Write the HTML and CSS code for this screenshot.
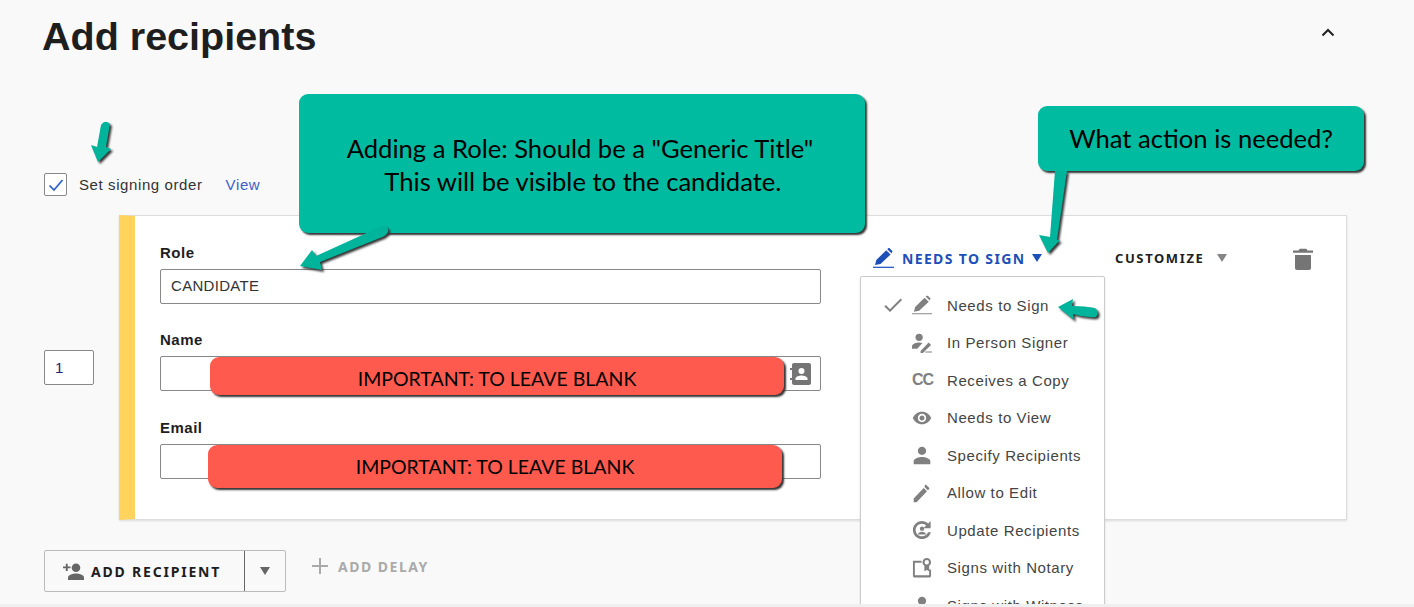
FILE: index.html
```html
<!DOCTYPE html>
<html lang="en">
<head>
  <meta charset="UTF-8">
  <meta name="viewport" content="width=device-width, initial-scale=1.0">
  <title>Add recipients</title>
  <link rel="stylesheet" href="styles.css">
</head>
<body>
  <svg class="defs" width="0" height="0">
    <symbol id="pen-line" viewBox="0 0 21 20">
      <path d="M2 17l1.300-5L13.200 2.300 17.600 6.500 7.500 16zM14.300 1.200 15.200.3c.4-.4 1-.4 1.400 0l2.500 2.400c.4.4.4 1 0 1.400l-.5 1.300z"/>
      <rect x="0" y="18.700" width="21" height="1.200"/>
    </symbol>
    <symbol id="person" viewBox="0 0 24 24">
      <path d="M12 12c2.800 0 5-2.200 5-5s-2.200-5-5-5-5 2.200-5 5 2.200 5 5 5zm0 2.500c-3.300 0-10 1.700-10 5V23h20v-3.500c0-3.300-6.700-5-10-5z"/>
    </symbol>
  </svg>

  <div class="page">
    <header class="head">
      <h1>Add recipients</h1>
      <svg class="chevron" viewBox="0 0 14 9" width="14" height="9"><path d="M1.500 7.500 7 2l5.500 5.500" fill="none" stroke="#222" stroke-width="2"/></svg>
    </header>

    <div class="order-row">
      <span class="checkbox">
        <svg viewBox="0 0 16 14" width="16" height="14"><path d="M1.500 7.500 6 12 14.500 2" fill="none" stroke="#2b5fd0" stroke-width="1.700"/></svg>
      </span>
      <span class="order-label">Set signing order</span>
      <a class="view" href="#">View</a>
    </div>

    <div class="recipient">
      <div class="order-box">1</div>
      <section class="card">
        <div class="fields">
          <div class="field">
            <label>Role</label>
            <div class="input">CANDIDATE</div>
          </div>
          <div class="field">
            <label>Name</label>
            <div class="input">
              <svg class="contact" viewBox="0 0 22 24" width="22" height="24">
                <path d="M4 1h15c1.100 0 2 .9 2 2v18c0 1.100-.9 2-2 2H4c-1.100 0-2-.9-2-2v-3H0v-2h2V8H0V6h2V3c0-1.100.9-2 2-2z" fill="#757575"/>
                <circle cx="11.500" cy="9" r="3" fill="#fff"/>
                <path d="M5.500 18v-1.500c0-2 4-3 6-3s6 1 6 3V18z" fill="#fff"/>
              </svg>
            </div>
          </div>
          <div class="field">
            <label>Email</label>
            <div class="input"></div>
          </div>
        </div>

        <div class="actions">
          <div class="action-col">
            <button class="action action-sign">
              <svg class="action-icon" width="21" height="20"><use href="#pen-line"/></svg>
              NEEDS TO SIGN
              <i class="caret"></i>
            </button>
            <ul class="menu">
              <li>
                <svg class="tick" viewBox="0 0 24 24" width="24" height="24"><path d="M9 16.200 4.800 12l-1.400 1.400L9 19 21 7l-1.400-1.400z"/></svg>
                <svg class="menu-icon" viewBox="0 0 21 20"><use href="#pen-line"/></svg>
                Needs to Sign
              </li>
              <li>
                <svg class="menu-icon" viewBox="0 0 21 20">
                  <circle cx="7.500" cy="4" r="3.800"/>
                  <path d="M0 16v-2.500c0-2.500 4.500-4 7.500-4 1.200 0 2.400.2 3.500.6L5.500 16zM9 18.500l8.500-9 2.500 2.500-8.500 8.500H9zM14 18.800h7V20h-7z"/>
                </svg>
                In Person Signer
              </li>
              <li>
                <span class="menu-icon cc">CC</span>
                Receives a Copy
              </li>
              <li>
                <svg class="menu-icon" viewBox="0 0 24 24"><path d="M12 4.500C7 4.500 2.700 7.600 1 12c1.700 4.400 6 7.500 11 7.500s9.300-3.100 11-7.500c-1.700-4.400-6-7.500-11-7.500zM12 17c-2.800 0-5-2.200-5-5s2.200-5 5-5 5 2.200 5 5-2.200 5-5 5zm0-8c-1.700 0-3 1.300-3 3s1.300 3 3 3 3-1.300 3-3-1.300-3-3-3z"/></svg>
                Needs to View
              </li>
              <li>
                <svg class="menu-icon" viewBox="0 0 24 24"><use href="#person"/></svg>
                Specify Recipients
              </li>
              <li>
                <svg class="menu-icon" viewBox="0 0 24 24"><path d="M2 18.500V23h3.500L18 10l-4-4zM20.500 7.500c.5-.5.5-1.200 0-1.700l-3.300-3.300c-.5-.5-1.200-.5-1.700 0L15 4.800l4 4z"/></svg>
                Allow to Edit
              </li>
              <li>
                <svg class="menu-icon" viewBox="0 0 22 22">
                  <path d="M11 1c2.600 0 5 1 6.800 2.800L20.500 1v8h-8l3-3C14.400 4.800 12.800 4 11 4c-3.900 0-7 3.100-7 7s3.100 7 7 7c3 0 5.600-1.900 6.600-4.500h3.100C19.600 17.800 15.700 21 11 21 5.500 21 1 16.500 1 11S5.500 1 11 1z"/>
                  <circle cx="11" cy="9.500" r="2.400"/>
                  <path d="M6.500 16c0-2 3-3 4.500-3s4.500 1 4.500 3z"/>
                </svg>
                Update Recipients
              </li>
              <li>
                <svg class="menu-icon" viewBox="0 0 21 21">
                  <path d="M1 3h9v2H3v13h15v-6h2v7a1.500 1.500 0 0 1-1.500 1.500h-16A1.500 1.500 0 0 1 1 19z"/>
                  <path d="M15.500 0a4.500 4.500 0 0 1 2.500 8.200V14l-2.500-1.500L13 14V8.200A4.500 4.500 0 0 1 15.500 0zm0 2.200a2.300 2.300 0 1 0 0 4.600 2.300 2.300 0 0 0 0-4.600z"/>
                </svg>
                Signs with Notary
              </li>
              <li>
                <svg class="menu-icon" viewBox="0 0 24 24"><use href="#person"/></svg>
                Signs with Witness
              </li>
            </ul>
          </div>
          <button class="action action-custom">
            CUSTOMIZE
            <i class="caret"></i>
          </button>
          <svg class="trash" viewBox="0 0 20 22" width="20" height="22"><path d="M2 7h16v13c0 1.100-.9 2-2 2H4c-1.100 0-2-.9-2-2zM20 2.500v2.200H0V2.500h5.500L6.700.8h6.600l1.200 1.700z"/></svg>
        </div>
      </section>
    </div>

    <div class="bottom">
      <div class="split">
        <button class="split-main">
          <svg viewBox="0 0 21 17" width="21" height="17">
            <path d="M0 3.500h2.800V.8h1.900v2.700h2.800v1.800H4.700V8H2.800V5.300H0z"/>
            <circle cx="13" cy="4.800" r="4.300"/>
            <path d="M5 17v-2.500c0-2.900 5.300-4 8-4s8 1.100 8 4V17z"/>
          </svg>
          ADD RECIPIENT
        </button>
        <button class="split-caret"><i class="caret"></i></button>
      </div>
      <button class="add-delay">
        <svg viewBox="0 0 16 16" width="16" height="16"><path d="M7 0h2v7h7v2H9v7H7V9H0V7h7z"/></svg>
        ADD DELAY
      </button>
    </div>

    <!-- annotations drawn on top of the screenshot -->
    <div class="note note-role">Adding a Role: Should be a "Generic Title"<br>&nbsp;This will be visible to the candidate.</div>
    <div class="note note-action">What action is needed?</div>
    <div class="blank blank-name">IMPORTANT: TO LEAVE BLANK</div>
    <div class="blank blank-email">IMPORTANT: TO LEAVE BLANK</div>
    <svg class="arrows" width="1414" height="607" viewBox="0 0 1414 607">
      <path d="M101 125Q105 119 110 124L106 147 111 149 98 162 91 145 97 147Z"/>
      <path d="M382 226Q389 225 388 232 386 236 380 238L320 262 322 270 300 266 312 250 316 256Z"/>
      <path d="M1055 171H1067L1057 240 1060 240 1048 253 1039 235 1050 237Z"/>
      <path d="M1058 307 1073 299 1072 306Q1085 306 1095 308 1100 312 1096 317 1085 318 1073 314L1074 320Z"/>
    </svg>
  </div>
</body>
</html>
```
FILE: styles.css
```css
*{
  margin: 0;
  padding: 0;
  box-sizing: border-box;
}
ul{
  list-style: none;
}
button{
  border: none;
  background: none;
  font: inherit;
  color: inherit;
}
body{
  background-color: #efefef;
  font-family: "Liberation Sans", Arial, sans-serif;
  color: #1e1e1e;
}
.defs{
  position: absolute;
}
.page{
  position: relative;
  height: 604px;
  overflow: hidden;
  padding: 0 67px 0 44px;
  background-color: #f9f9f9;
}

.head{
  height: 72px;
  display: flex;
  align-items: center;
  justify-content: space-between;
  padding-right: 12px;
}
.head h1{
  margin-left: -2px;
  font-size: 39.5px;
  font-weight: 700;
  line-height: 72px;
}
.chevron{
  margin-top: -8px;
}

.order-row{
  height: 23px;
  margin-top: 101px;
  display: flex;
  align-items: center;
  font-size: 15px;
  letter-spacing: .6px;
}
.checkbox{
  width: 23px;
  height: 23px;
  display: flex;
  align-items: center;
  justify-content: center;
  background-color: #fff;
  border: 1px solid #888;
  border-radius: 2px;
}
.order-label{
  margin-left: 12px;
  color: #333;
}
.view{
  margin-left: 23px;
  color: #3e5fc9;
  text-decoration: none;
}

.recipient{
  margin-top: 19px;
  display: flex;
  align-items: center;
  gap: 25px;
}
.order-box{
  width: 50px;
  height: 35px;
  padding-left: 10px;
  line-height: 33px;
  font-size: 15px;
  color: #1a237e;
  background-color: #fff;
  border: 1px solid #888;
  border-radius: 2px;
}
.card{
  flex: 1;
  height: 305px;
  display: flex;
  padding: 26px 0 0 25px;
  background-color: #fff;
  border: 1px solid #ddd;
  border-left: 16px solid #ffd35c;
  box-shadow: 0 1px 2px rgba(0,0,0,.12);
}
.fields{
  width: 661px;
  display: flex;
  flex-direction: column;
  gap: 25px;
}
.field:last-child{
  margin-top: 1px;
}
.field label{
  display: block;
  height: 20px;
  margin-bottom: 7px;
  line-height: 22px;
  font-size: 15px;
  font-weight: 700;
  letter-spacing: .5px;
}
.input{
  height: 35px;
  display: flex;
  align-items: center;
  justify-content: flex-end;
  padding: 0 8px 2px 10px;
  font-size: 15px;
  letter-spacing: .3px;
  color: #333;
  border: 1px solid #888;
  border-radius: 2px;
}
.field:first-child .input{
  justify-content: flex-start;
}
.contact{
  margin-top: 2px;
}

.actions{
  flex: 1;
  display: flex;
  align-items: flex-start;
  margin-left: 52px;
  padding-top: 5px;
}
.action-col{
  position: relative;
  width: 242px;
}
.action{
  height: 22px;
  display: flex;
  align-items: center;
  font-family: "Noto Sans", "Open Sans", sans-serif;
  font-size: 13px;
  font-weight: 700;
  letter-spacing: 1.6px;
}
.action-sign{
  font-size: 14px;
  letter-spacing: 1.35px;
  color: #1d4fb8;
}
.action-icon{
  margin-right: 8px;
  fill: #1d4fb8;
}
.caret{
  display: inline-block;
  margin-left: 7px;
  border-left: 5.5px solid transparent;
  border-right: 5.5px solid transparent;
  border-top: 8px solid #858585;
}
.action-sign .caret{
  border-top-color: #1d4fb8;
}
.action-custom .caret{
  margin-left: 13px;
}
.trash{
  margin: 1px 0 0 66px;
  fill: #757575;
}

.menu{
  position: absolute;
  top: 29px;
  left: -13px;
  width: 245px;
  background-color: #fff;
  border: 1px solid #ccc;
  border-radius: 2px;
  box-shadow: 0 1px 2px rgba(0,0,0,.15);
  padding: 9.6px 0 0 51px;
}
.menu li{
  position: relative;
  height: 37.5px;
  display: flex;
  align-items: center;
  font-size: 15px;
  letter-spacing: .6px;
  color: #444;
}
.menu-icon{
  width: 20px;
  height: 20px;
  margin-right: 15px;
  flex: none;
  fill: #808080;
}
.cc{
  font-size: 16px;
  font-weight: 700;
  letter-spacing: -1px;
  line-height: 20px;
  color: #808080;
}
.tick{
  position: absolute;
  left: -31px;
  fill: #808080;
}

.bottom{
  margin-top: 30px;
  display: flex;
  align-items: flex-start;
}
.split{
  width: 242px;
  height: 42px;
  display: flex;
  border: 1px solid #bbb;
  border-radius: 2px;
}
.split-main{
  width: 200px;
  display: flex;
  align-items: center;
  gap: 7px;
  padding-left: 18px;
  font-family: "Noto Sans", "Open Sans", sans-serif;
  font-size: 14px;
  font-weight: 700;
  letter-spacing: 1.8px;
  border-right: 1px solid #666;
}
.split-main svg{
  fill: #666;
}
.split-caret{
  flex: 1;
  display: flex;
  align-items: center;
  justify-content: center;
}
.split-caret .caret{
  margin: 0;
  border-top-color: #666;
}
.add-delay{
  margin: 8px 0 0 26px;
  height: 16px;
  display: flex;
  align-items: center;
  gap: 10px;
  font-family: "Noto Sans", "Open Sans", sans-serif;
  font-size: 14px;
  font-weight: 700;
  letter-spacing: 1.5px;
  color: #aaa;
}
.add-delay svg{
  fill: #aaa;
}

.note,
.blank{
  position: absolute;
  display: flex;
  align-items: center;
  justify-content: center;
  text-align: center;
  color: #000;
  font-family: "Comic Sans MS", "Lato", sans-serif;
  box-shadow: 2px 2px 2px #333;
}
.note{
  background-color: #00bba0;
  border-radius: 9px;
  font-size: 25.6px;
  line-height: 33px;
}
.note-role{
  left: 299px;
  top: 94px;
  width: 566px;
  height: 139px;
  padding: 2px 4px 0 0;
}
.note-action{
  left: 1038px;
  top: 106px;
  width: 326px;
  height: 65px;
}
.blank{
  background-color: #ff5a4d;
  border-radius: 9px;
  font-size: 19.5px;
}
.blank-name{
  left: 210px;
  top: 357px;
  width: 574px;
  height: 38px;
  padding-top: 4px;
}
.blank-email{
  left: 208px;
  top: 445px;
  width: 574px;
  height: 43px;
}
.arrows{
  position: absolute;
  left: 0;
  top: 0;
  fill: #00b39b;
  filter: drop-shadow(2px 2px 1px #333);
  pointer-events: none;
}
```
